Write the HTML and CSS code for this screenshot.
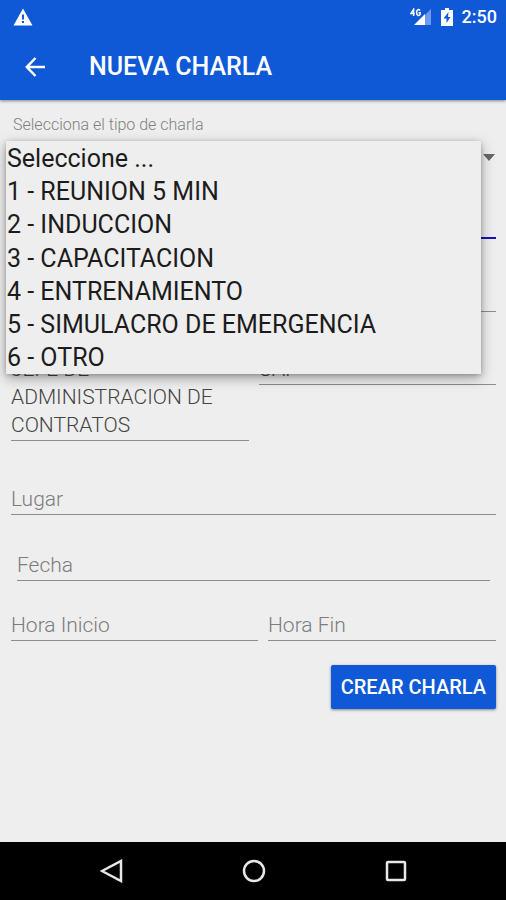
FILE: index.html
```html
<!DOCTYPE html>
<html lang="es">
<head>
<meta charset="utf-8">
<meta name="viewport" content="width=device-width, initial-scale=1">
<title>Nueva charla</title>
<link rel="stylesheet" href="styles.css">
</head>
<body>
<header class="top">
  <div class="status">
    <svg class="warn" viewBox="0 0 20 18" aria-hidden="true"><path fill="#fff" fill-rule="evenodd" d="M10 0.5 19.5 17.5H0.5ZM9 6.5v5h2v-5ZM9 13v2h2v-2Z"/></svg>
    <div class="status-right">
      <svg class="signal" viewBox="0 0 22 18" aria-hidden="true">
        <path fill="#6c9aec" d="M21 1v16H5Z"/><path fill="#fff" d="M15 6v11H4Z"/>
        <path fill="none" stroke="#fff" stroke-width="1.500" d="M3.600 8V1.400L.8 5.600h4M10 2.600C9 .8 6.600 1.400 6.600 4.500s2.600 3.800 3.500 2V4.800H8.500"/>
      </svg>
      <svg class="battery" viewBox="0 0 12 18" aria-hidden="true"><path fill="#fff" d="M4 0h4v2h4v16H0V2h4Z"/><path fill="#0f59d7" d="M7.500 4 2.500 10.500h3V15l4-6H7Z"/></svg>
      <span class="clock">2:50</span>
    </div>
  </div>
  <div class="appbar">
    <button class="back" type="button" aria-label="Volver"><svg viewBox="0 0 20 20" aria-hidden="true"><path fill="none" stroke="#fff" stroke-width="2.500" d="M20 10H2M10.500 1 1.800 10l8.700 9"/></svg></button>
    <h1>NUEVA CHARLA</h1>
  </div>
</header>
<main>
  <form class="form">
    <label class="caption" for="tipo">Selecciona el tipo de charla</label>
    <div class="spinner">
      <select id="tipo"><option>Seleccione ...</option></select>
      <ul class="menu" role="listbox" aria-label="Tipo de charla">
        <li role="option">Seleccione ...</li>
        <li role="option">1 - REUNION 5 MIN</li>
        <li role="option">2 - INDUCCION</li>
        <li role="option">3 - CAPACITACION</li>
        <li role="option">4 - ENTRENAMIENTO</li>
        <li role="option">5 - SIMULACRO DE EMERGENCIA</li>
        <li role="option">6 - OTRO</li>
      </ul>
    </div>
    <input class="field focused" type="text" aria-label="Tema">
    <input class="field" type="text" aria-label="Relator">
    <div class="pair halves">
      <textarea class="field" rows="3" aria-label="Cargo">JEFE DE ADMINISTRACION DE CONTRATOS</textarea>
      <input class="field" type="text" aria-label="Unidad" value="UAP">
    </div>
    <input class="field place" type="text" aria-label="Lugar" placeholder="Lugar">
    <div class="date"><input class="field" type="text" aria-label="Fecha" placeholder="Fecha"></div>
    <div class="pair hours">
      <input class="field" type="text" aria-label="Hora Inicio" placeholder="Hora Inicio">
      <input class="field" type="text" aria-label="Hora Fin" placeholder="Hora Fin">
    </div>
    <button class="submit" type="button">CREAR CHARLA</button>
  </form>
</main>
<nav class="nav" aria-label="Sistema">
  <button type="button" aria-label="Atrás"><svg viewBox="0 0 24 24"><path d="M21 2v20L2 12Z"/></svg></button>
  <button type="button" aria-label="Inicio"><svg viewBox="0 0 24 24"><circle cx="12" cy="12" r="10"/></svg></button>
  <button type="button" aria-label="Recientes"><svg viewBox="0 0 24 24"><rect x="3" y="3" width="18" height="18" rx="1"/></svg></button>
</nav>
</body>
</html>
```
FILE: styles.css
```css
* { box-sizing: border-box; }
body {
  margin: 0;
  min-height: 100vh;
  display: flex;
  flex-direction: column;
  background: #eee;
  font-family: Roboto, "Liberation Sans", sans-serif;
}
button { border: 0; padding: 0; background: none; font: inherit; }
svg { display: block; }
.top { background: #0f59d7; color: #fff; box-shadow: 0 1px 3px rgba(0, 0, 0, .45); }
.status { height: 33px; padding: 0 9px 0 13px; display: flex; align-items: center; justify-content: space-between; }
.status-right { display: flex; align-items: center; gap: 9px; }
.warn { width: 20px; height: 18px; }
.signal { width: 22px; height: 18px; }
.battery { width: 12px; height: 18px; }
.clock { font-size: 18px; font-weight: 500; line-height: 33px; }
.appbar { height: 67px; padding-left: 25px; display: flex; align-items: center; gap: 44px; }
.back svg { width: 20px; height: 20px; }
h1 { margin: 0; font-size: 25px; font-weight: 500; line-height: 33px; }
main { flex: 1; }
.form { padding: 15px 10px 0 11px; display: flex; flex-direction: column; }
.caption { padding-left: 2px; font-size: 16px; line-height: 20px; font-weight: 300; color: #808080; }
.spinner { position: relative; margin-top: 8px; }
.spinner::after {
  content: "";
  position: absolute;
  top: 11px;
  right: 1px;
  border: 6px solid transparent;
  border-top: 7px solid #666;
  border-bottom: 0;
}
.spinner select {
  display: block;
  width: 100%;
  height: 28px;
  border: 0;
  background: none;
  appearance: none;
  font: inherit;
  font-size: 21px;
}
.menu {
  position: absolute;
  z-index: 2;
  top: -2px;
  left: -5px;
  right: 15px;
  height: 233px;
  margin: 0;
  padding: 1px 1px 0;
  display: grid;
  grid-template-rows: repeat(7, 1fr);
  list-style: none;
  background: #eee;
  color: #1c1c1c;
  font-size: 25px;
  line-height: 33px;
  box-shadow: 0 4px 12px rgba(0, 0, 0, .35), 0 1px 4px rgba(0, 0, 0, .2);
}
.menu li { display: flex; align-items: end; }
.field {
  display: block;
  width: 100%;
  height: 31px;
  margin: 0;
  padding: 1px 0;
  border: 0;
  border-bottom: 1px solid #8c8c8c;
  border-radius: 0;
  background: none;
  outline: 0;
  color: #444;
  font: 300 21px/28px Roboto, "Liberation Sans", sans-serif;
  resize: none;
  overflow: hidden;
}
.field::placeholder { color: #7c7c7c; opacity: 1; }
textarea.field { height: 87px; }
.form > .field, .pair { margin-top: 42px; }
.form > .focused { margin-top: 37px; border-bottom: 2px solid #1a12b4; }
.form > .place { margin-top: 43px; }
.pair { display: grid; align-items: start; gap: 10px; }
.halves { grid-template-columns: 1fr 1fr; }
.date { margin-top: 35px; padding: 0 6px; }
.hours { margin-top: 29px; grid-template-columns: 13fr 12fr; }
.submit {
  align-self: flex-end;
  margin-top: 24px;
  height: 44px;
  padding: 0 10px;
  border-radius: 2px;
  background: #0f59d7;
  color: #fff;
  font-size: 20px;
  font-weight: 500;
  box-shadow: 0 1px 3px rgba(0, 0, 0, .45);
}
.nav { height: 58px; padding: 0 39px 0 41px; display: grid; grid-template-columns: repeat(3, 1fr); background: #000; }
.nav button { display: flex; align-items: center; justify-content: center; }
.nav svg { width: 24px; height: 24px; fill: none; stroke: #e8e8e8; stroke-width: 2.500; }
```
